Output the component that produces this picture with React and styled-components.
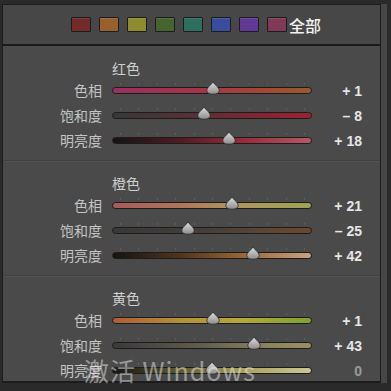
import React from "react";
import styled, { createGlobalStyle } from "styled-components";

const Global = createGlobalStyle`
  html, body {
    margin: 0;
    padding: 0;
    background: #2a2a2a;
  }
  body {
    width: 391px;
    height: 391px;
    overflow: hidden;
    font-family: "Noto Sans CJK SC", "Liberation Sans", sans-serif;
  }
`;

const swatches = [
  "#722a2a",
  "#98602c",
  "#8e8c30",
  "#46642e",
  "#2e6e5e",
  "#3a4c9c",
  "#623896",
  "#7e3a56",
];

const groups = [
  {
    title: "红色",
    rows: [
      { label: "色相", value: 1, grad: "linear-gradient(90deg,#9a3060,#a83448 45%,#a44834 75%,#985a2c)" },
      { label: "饱和度", value: -8, grad: "linear-gradient(90deg,#383838,#523236 35%,#7e2632 70%,#9c2232)" },
      { label: "明亮度", value: 18, grad: "linear-gradient(90deg,#141414,#521c22 35%,#982a3a 65%,#b45a66)" },
    ],
  },
  {
    title: "橙色",
    rows: [
      { label: "色相", value: 21, grad: "linear-gradient(90deg,#a85a5a,#b07658 35%,#b0945e 60%,#9ca452)" },
      { label: "饱和度", value: -25, grad: "linear-gradient(90deg,#383838,#443e38 45%,#5e4632 80%,#6c482e)" },
      { label: "明亮度", value: 42, grad: "linear-gradient(90deg,#141414,#52361c 35%,#9a6434 65%,#c8a282)" },
    ],
  },
  {
    title: "黄色",
    rows: [
      { label: "色相", value: 1, grad: "linear-gradient(90deg,#b05c38,#b49238 35%,#b4a83a 65%,#7ca232)" },
      { label: "饱和度", value: 43, grad: "linear-gradient(90deg,#3a3a3a,#625e4c 45%,#8c845e 80%,#9a9060)" },
      { label: "明亮度", value: 0, grad: "linear-gradient(90deg,#141414,#625c30 35%,#a6a058 65%,#ccc69a)" },
    ],
  },
];

const Frame = styled.div`
  display: flex;
  width: 391px;
  height: 391px;
  padding: 4px 0 0 2px;
  box-sizing: border-box;
  position: relative;
`;

const Panel = styled.div`
  width: 379px;
  height: 379px;
  background: #4a4a4a;
  border-left: 1px solid #1c1c1c;
  border-top: 1px solid #1c1c1c;
  border-right: 1px solid #1c1c1c;
  border-bottom: 2px solid #1c1c1c;
  box-sizing: border-box;
  overflow: hidden;
`;

const Gutter = styled.div`
  width: 6px;
  height: 379px;
  background: #464646;
`;

const Header = styled.div`
  height: 39px;
  display: flex;
  align-items: center;
  padding-left: 68px;
  border-bottom: 2px solid #1a1a1a;
  background: #474747;
`;

const Swatch = styled.div`
  width: 18px;
  height: 13px;
  margin-right: 8px;
  background: ${(p) => p.$c};
  border: 1.5px solid #1c1c1c;
  border-radius: 1px;
  box-shadow: inset 0 1px 0 rgba(255, 255, 255, 0.1);
`;

const AllLabel = styled.span`
  margin-left: -6px;
  color: #f2f2f2;
  font-size: 16px;
  font-weight: 500;
  line-height: 20px;
`;

const Section = styled.div`
  height: 115px;
  box-sizing: border-box;
  padding-top: 12px;
  border-bottom: 1px solid #404040;
  box-shadow: 0 1px 0 #525252;
`;

const Title = styled.div`
  height: 20px;
  line-height: 20px;
  padding-left: 109px;
  color: #cfcfcf;
  font-size: 14px;
`;

const Row = styled.div`
  display: grid;
  grid-template-columns: 99px 200px 40px;
  column-gap: 10px;
  align-items: center;
  height: 25px;
`;

const Label = styled.span`
  text-align: right;
  color: #c4c4c4;
  font-size: 14px;
  line-height: 25px;
`;

const Slider = styled.div`
  display: flex;
  flex-direction: column;
  height: 25px;
  justify-content: center;
`;

const Ticks = styled.div`
  display: flex;
  justify-content: space-between;
  padding: 0 7px 0 8px;
  height: 2px;
  margin-bottom: 2px;
`;

const Tick = styled.span`
  width: 1px;
  height: 2px;
  background: #5e5e5e;
`;

const Track = styled.div`
  position: relative;
  height: 5px;
  border: 1px solid #1c1c1c;
  border-radius: 4px;
  background: ${(p) => p.$grad};
  margin-bottom: 4px;
`;

const Thumb = styled.svg`
  position: absolute;
  top: -7px;
  width: 14px;
  height: 14px;
  margin-left: -7px;
`;

const Value = styled.span`
  text-align: right;
  font-family: "Liberation Sans", "DejaVu Sans", sans-serif;
  font-weight: bold;
  font-size: 14px;
  color: ${(p) => (p.$zero ? "#9a9a9a" : "#e6e6e6")};
  white-space: pre;
`;

const Watermark = styled.div`
  position: absolute;
  left: 84px;
  top: 355px;
  font-family: "Noto Sans CJK SC", "Liberation Sans", sans-serif;
  font-size: 25px;
  line-height: 30px;
  color: rgba(235, 235, 235, 0.5);
  letter-spacing: 1px;
  pointer-events: none;
`;

const fmt = (v) => (v > 0 ? `+ ${v}` : v < 0 ? `\u2013 ${-v}` : "0");

const SliderRow = ({ label, value, grad, id }) => (
  <Row>
    <Label>{label}</Label>
    <Slider>
      <Ticks>
        {Array.from({ length: 11 }).map((_, i) => (
          <Tick key={i} />
        ))}
      </Ticks>
      <Track $grad={grad}>
        <Thumb viewBox="0 0 14 14" style={{ left: `${99 + value * 0.97}px` }}>
          <defs>
            <linearGradient id={id} x1="0" y1="0" x2="0" y2="1">
              <stop offset="0" stopColor="#e0e0e0" />
              <stop offset="1" stopColor="#8c8c8c" />
            </linearGradient>
          </defs>
          <path
            d="M7 0.8 C8.6 3.8 13.2 6.4 13.2 9.4 C13.2 12 10.6 13.2 7 13.2 C3.4 13.2 0.8 12 0.8 9.4 C0.8 6.4 5.4 3.8 7 0.8 Z"
            fill={`url(#${id})`}
            stroke="#2a2a2a"
            strokeWidth="0.9"
          />
        </Thumb>
      </Track>
    </Slider>
    <Value $zero={value === 0}>{fmt(value)}</Value>
  </Row>
);

export default function App() {
  return (
    <>
      <Global />
      <Frame>
        <Panel>
          <Header>
            {swatches.map((c) => (
              <Swatch key={c} $c={c} />
            ))}
            <AllLabel>全部</AllLabel>
          </Header>
          {groups.map((g, gi) => (
            <Section key={g.title}>
              <Title>{g.title}</Title>
              {g.rows.map((r, ri) => (
                <SliderRow key={r.label} {...r} id={`th${gi}${ri}`} />
              ))}
            </Section>
          ))}
        </Panel>
        <Gutter />
        <Watermark>激活 Windows</Watermark>
      </Frame>
    </>
  );
}
